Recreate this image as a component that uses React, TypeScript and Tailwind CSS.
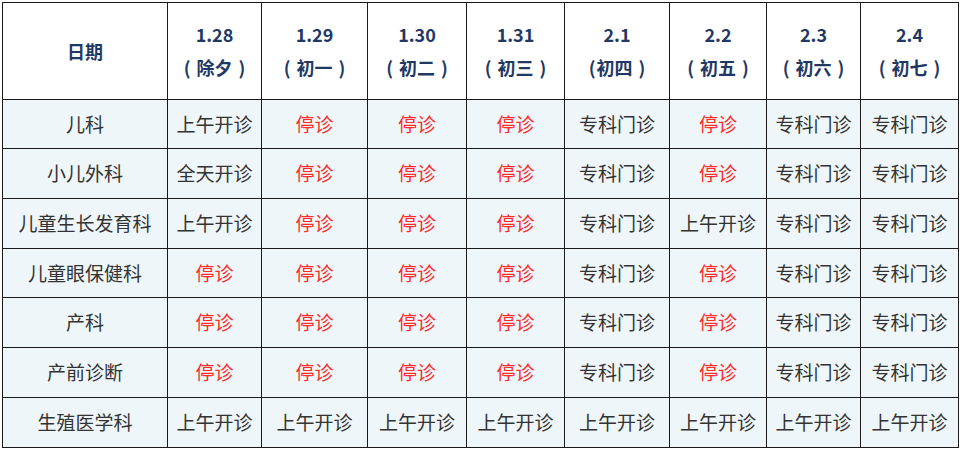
const COLS = [
  { date: "1.28", label: "除夕", tight: false },
  { date: "1.29", label: "初一", tight: false },
  { date: "1.30", label: "初二", tight: false },
  { date: "1.31", label: "初三", tight: false },
  { date: "2.1", label: "初四", tight: true },
  { date: "2.2", label: "初五", tight: false },
  { date: "2.3", label: "初六", tight: false },
  { date: "2.4", label: "初七", tight: false },
];

const WIDTHS = [165, 94, 106, 99, 98, 105, 97, 94, 98];
const ROW_HEIGHTS = [49, 50, 50, 49, 50, 50, 50];

const A = "上午开诊";
const S = "停诊";
const Z = "专科门诊";
const Q = "全天开诊";

const ROWS: [string, string[]][] = [
  ["儿科", [A, S, S, S, Z, S, Z, Z]],
  ["小儿外科", [Q, S, S, S, Z, S, Z, Z]],
  ["儿童生长发育科", [A, S, S, S, Z, A, Z, Z]],
  ["儿童眼保健科", [S, S, S, S, Z, S, Z, Z]],
  ["产科", [S, S, S, S, Z, S, Z, Z]],
  ["产前诊断", [S, S, S, S, Z, S, Z, Z]],
  ["生殖医学科", [A, A, A, A, A, A, A, A]],
];

export default function App() {
  return (
    <div
      className="h-[452px] w-[960px] bg-white pl-[2px] pt-[2px]"
      style={{ fontFamily: '"Noto Sans CJK SC", "Microsoft YaHei", sans-serif' }}
    >
      <table className="table-fixed border-collapse text-center">
        <colgroup>
          {WIDTHS.map((w, i) => (
            <col key={i} style={{ width: w }} />
          ))}
        </colgroup>
        <thead>
          <tr className="h-[97px] bg-white font-bold text-[#1f3864]">
            <th className="border-[1.5px] border-[#1a1a1a] p-0 text-[18px]">日期</th>
            {COLS.map((c) => (
              <th key={c.date} className="border-[1.5px] border-[#1a1a1a] p-0 leading-[33px]">
                <div className="text-[18px]">{c.date}</div>
                <div className="whitespace-nowrap text-[18px]">
                  (<span className={c.tight ? "mr-[6px] ml-[1px]" : "mx-[6px]"}>{c.label}</span>)
                </div>
              </th>
            ))}
          </tr>
        </thead>
        <tbody>
          {ROWS.map(([dept, cells], r) => (
            <tr key={dept} className="bg-[#eef6f9] text-[19px]" style={{ height: ROW_HEIGHTS[r] }}>
              <td className="border-[1.5px] border-[#1a1a1a] p-0 text-[#333333]">{dept}</td>
              {cells.map((v, i) => (
                <td
                  key={i}
                  className={
                    "border-[1.5px] border-[#1a1a1a] p-0 whitespace-nowrap " +
                    (v === S ? "text-[#ff2a2a]" : "text-[#333333]")
                  }
                >
                  {v}
                </td>
              ))}
            </tr>
          ))}
        </tbody>
      </table>
    </div>
  );
}
